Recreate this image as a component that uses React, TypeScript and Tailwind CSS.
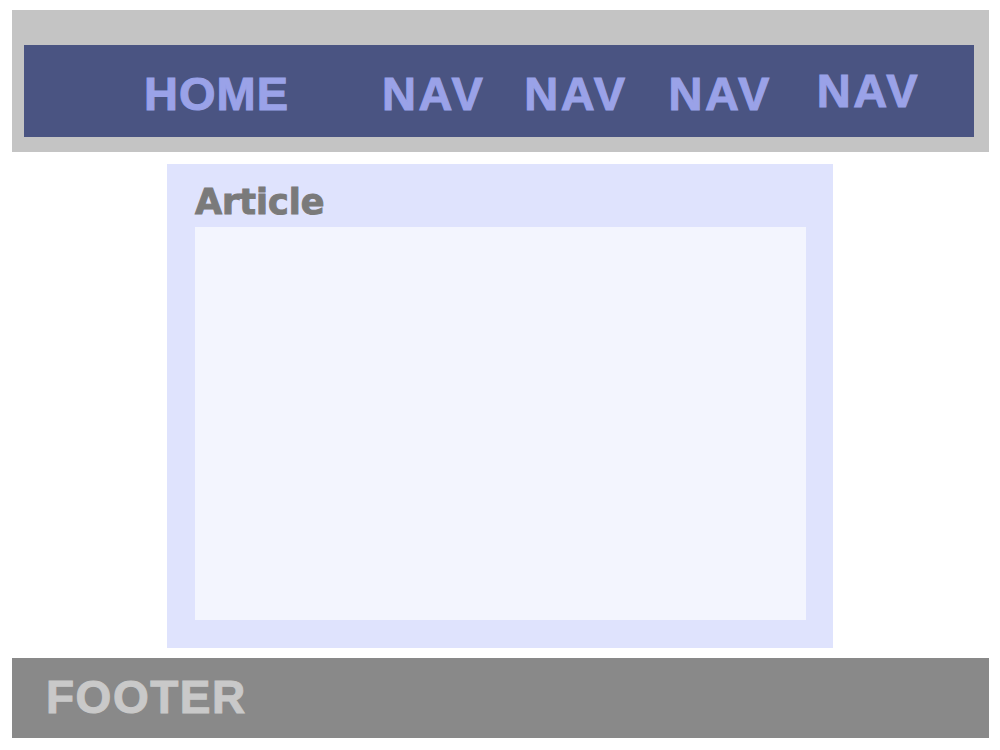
const navItems = [
  { label: "NAV", className: "ml-[93px]" },
  { label: "NAV", className: "ml-[39px]" },
  { label: "NAV", className: "ml-[41px]" },
  { label: "NAV", className: "ml-[45px] -mt-[3px]" },
];

export default function App() {
  return (
    <div className="min-h-[750px] bg-white font-['Liberation_Sans',Arial,sans-serif]">
      {/* Header */}
      <header className="ml-[12px] mt-[10px] w-[977px] bg-[#c4c4c4] pl-[12px] pr-[15px] pt-[35px] pb-[15px]">
        <nav className="flex h-[92px] items-start bg-[#4a5482] pl-[120px] pt-[25px] text-[47px] font-bold leading-[47px] text-[#9aa2e8] [-webkit-text-stroke:1px_#9aa2e8]">
          <a href="#" className="tracking-[1px]">HOME</a>
          {navItems.map((item, i) => (
            <a key={i} href="#" className={`tracking-[2.5px] ${item.className}`}>
              {item.label}
            </a>
          ))}
        </nav>
      </header>

      {/* Article */}
      <main className="ml-[167px] mt-[12px] flex h-[484px] w-[666px] flex-col bg-[#dfe3fd] pl-[28px] pr-[27px] pt-[21px] pb-[28px]">
        <h1 className="font-['DejaVu_Sans',Verdana,sans-serif] text-[35px] font-bold leading-[35px] text-[#7a7a7a] [-webkit-text-stroke:1px_#7a7a7a]">
          Article
        </h1>
        <div className="mt-[7px] flex-1 bg-[#f3f5fe]" />
      </main>

      {/* Footer */}
      <footer className="ml-[12px] mt-[10px] h-[80px] w-[977px] bg-[#898989] pl-[34px] pt-[16px]">
        <span className="text-[46px] font-bold leading-[46px] tracking-[1.5px] text-[#c9c9c9] [-webkit-text-stroke:1px_#c9c9c9]">
          FOOTER
        </span>
      </footer>
    </div>
  );
}
